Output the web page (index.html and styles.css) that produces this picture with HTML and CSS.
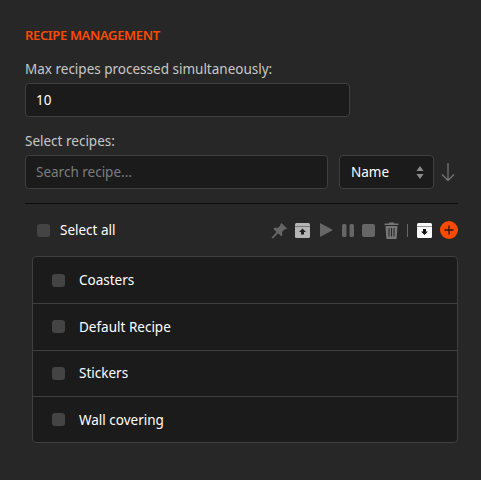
FILE: index.html
```html
<!DOCTYPE html>
<html lang="en">
<head>
<meta charset="utf-8">
<title>Recipe management</title>
<link rel="stylesheet" href="styles.css">
</head>
<body>
<main class="panel">
  <h2 class="title">RECIPE MANAGEMENT</h2>
  <label class="label first">Max recipes processed simultaneously:</label>
  <div class="field max">10</div>
  <label class="label second">Select recipes:</label>
  <div class="search-row">
    <div class="field search">Search recipe...</div>
    <div class="field sort">
      <span>Name</span>
      <svg width="8" height="15" viewBox="0 0 8 15"><path d="M4 1l3.600 5H.4zM4 14L.4 9h7.200z" fill="#8a8a8a"/></svg>
    </div>
    <svg class="arrow" width="14" height="20" viewBox="0 0 14 20"><path d="M7 1v17.500M1 12.500l6 6 6-6" fill="none" stroke="#7a7a7a" stroke-width="1.200"/></svg>
  </div>
  <hr class="divider">
  <div class="toolbar">
    <span class="check"></span>
    <span class="all">Select all</span>
    <div class="tools">
      <svg width="17" height="17" viewBox="0 0 17 17"><path d="M10.500 1l5.500 5.500-1.300 1-1-.3-2.700 2.700.4 3-1.300 1.300-3-3-4.900 5.300-1.700-.8 5-5.800-3-3 1.300-1.300 3 .4 2.700-2.700-.2-1z" fill="#666"/></svg>
      <svg class="archive" width="15" height="15" viewBox="0 0 15 15"><rect width="15" height="15" rx="1.500" fill="#b5b5b5"/><rect y="3" width="15" height="1" fill="#777"/><path d="M7.500 5.500l3.500 3.500H9v2.500H6V9H4z" fill="#222"/></svg>
      <svg width="13" height="14" viewBox="0 0 13 14"><path d="M0 0l13 7-13 7z" fill="#666"/></svg>
      <svg width="12" height="13" viewBox="0 0 12 13"><rect width="4.500" height="13" rx="1.500" fill="#666"/><rect x="7.500" width="4.500" height="13" rx="1.500" fill="#666"/></svg>
      <svg width="13" height="13" viewBox="0 0 13 13"><rect width="13" height="13" rx="2" fill="#666"/></svg>
      <svg width="15" height="17" viewBox="0 0 15 17"><path d="M5 1.500V.5h5v1h4.500v1.600H.5V1.500zM1.500 4h12l-.8 12a1 1 0 0 1-1 1H3.300a1 1 0 0 1-1-1z" fill="#777"/><path d="M5 6v8.500M7.500 6v8.500M10 6v8.500" stroke="#2a2a2a" stroke-width="1.100"/></svg>
      <span class="sep"></span>
      <svg width="15" height="15" viewBox="0 0 15 15"><rect width="15" height="15" rx="1.500" fill="#fff"/><rect y="3" width="15" height="1" fill="#999"/><path d="M7.500 12l-3.500-3.500h2V6h3v2.500h2z" fill="#111"/></svg>
      <svg width="18" height="18" viewBox="0 0 18 18"><circle cx="9" cy="9" r="9" fill="#fe4a00"/><path d="M9 4.500v9M4.500 9h9" stroke="#1c1c1c" stroke-width="1.300"/></svg>
    </div>
  </div>
  <ul class="list">
    <li class="row"><span class="check"></span>Coasters</li>
    <li class="row"><span class="check"></span>Default Recipe</li>
    <li class="row"><span class="check"></span>Stickers</li>
    <li class="row"><span class="check"></span>Wall covering</li>
  </ul>
</main>
</body>
</html>
```
FILE: styles.css
```css
* { box-sizing: border-box; }
html, body { margin: 0; height: 100%; }
body {
  background: #272727;
  color: #fff;
  font-family: "Noto Sans", "Open Sans", sans-serif;
  font-size: 13.500px;
}
.panel {
  width: 481px;
  height: 480px;
  padding: 26px 23px 0 25px;
}
.title {
  margin: 0;
  color: #fe4a00;
  font-size: 13px;
  line-height: 18px;
  font-weight: 600;
  letter-spacing: -0.350px;
}
.label {
  display: block;
  color: #c8c8c8;
  line-height: 20px;
}
.label.first { margin-top: 15px; margin-bottom: 4px; }
.label.second { margin-top: 14px; margin-bottom: 4px; }
.field {
  display: flex;
  align-items: center;
  height: 34px;
  padding: 0 10px;
  background: #1b1b1b;
  border: 1px solid #3f3f3f;
  border-radius: 4px;
}
.max { width: 325px; }
.search-row { display: flex; align-items: center; }
.search { width: 303px; color: #7d7d7d; }
.sort {
  width: 95px;
  margin-left: 11px;
  padding: 0 9px 0 11px;
  justify-content: space-between;
}
.arrow { margin-left: 7px; }
.divider {
  height: 1px;
  margin: 14px 0 0;
  border: 0;
  background: #0d0d0d;
}
.toolbar {
  display: flex;
  align-items: center;
  height: 52px;
  padding-left: 12px;
}
.check {
  flex: none;
  width: 13px;
  height: 13px;
  background: #444;
  border-radius: 3px;
}
.all { margin-left: 10px; }
.tools {
  display: flex;
  align-items: center;
  margin-left: auto;
  gap: 8.500px;
}
.archive { margin: 0 1.500px 0 -1.500px; }
.sep { width: 1px; height: 13px; background: #666; }
.list {
  width: 426px;
  margin: 0 0 0 7px;
  padding: 0;
  list-style: none;
  background: #1b1b1b;
  border: 1px solid #3f3f3f;
  border-radius: 4px;
}
.row {
  display: flex;
  align-items: center;
  gap: 14px;
  height: 46.300px;
  padding-left: 19px;
  border-top: 1px solid #3f3f3f;
}
.row:first-child { border-top: 0; }
```
